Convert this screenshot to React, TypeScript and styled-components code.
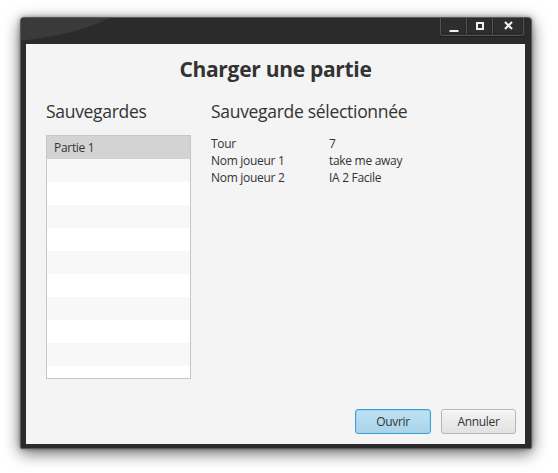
import React from "react";
import styled, { createGlobalStyle } from "styled-components";

const Global = createGlobalStyle`
  html, body { margin: 0; padding: 0; background: #ffffff; height: 100%; }
  body { font-family: "Open Sans", "Noto Sans", sans-serif; color: #333333; }
`;

const Page = styled.div`
  box-sizing: border-box;
  min-height: 100vh;
  padding: 17px 0 0 20px;
`;

const Window = styled.div`
  position: relative;
  box-sizing: border-box;
  width: 512px;
  height: 432px;
  display: flex;
  flex-direction: column;
  background: #2b2b2b;
  border: 1px solid #5a5a5a;
  border-radius: 4px 4px 2px 2px;
  padding: 0 6px 4px 5px;
  box-shadow: 0 4px 16px rgba(0, 0, 0, 0.6), 0 0 4px rgba(0, 0, 0, 0.35);
  overflow: hidden;
  &::before {
    content: "";
    position: absolute;
    left: -201px;
    top: -140px;
    width: 340px;
    height: 164px;
    border-radius: 50%;
    background: #3a3a3a;
  }
`;

const TitleBar = styled.div`
  position: relative;
  z-index: 1;
  height: 26px;
  display: flex;
  justify-content: flex-end;
  align-items: flex-start;
`;

const Controls = styled.div`
  display: flex;
  margin-top: -1px;
  margin-right: 1px;
  height: 18px;
  border: 1px solid #555555;
  border-top: none;
  border-radius: 0 0 3px 3px;
  background: #2e2e2e;
  box-shadow: 0 1px 0 #1c1c1c;
`;

const CtrlButton = styled.div<{ $w: number; $last?: boolean }>`
  width: ${(p) => p.$w}px;
  height: 17px;
  display: flex;
  align-items: center;
  justify-content: center;
  border-right: ${(p) => (p.$last ? "none" : "1px solid #555555")};
  box-shadow: inset 0 0 0 1px #262626;
`;

const Client = styled.div`
  position: relative;
  z-index: 1;
  flex: 1;
  background: #f4f4f4;
  display: flex;
  flex-direction: column;
  padding: 12px 9px 10px 20px;
  box-sizing: border-box;
`;

const Title = styled.h1`
  margin: 0;
  padding-right: 11px;
  text-align: center;
  font-size: 21px;
  line-height: 26px;
  font-weight: 700;
  letter-spacing: -0.3px;
  color: #333333;
`;

const Main = styled.div`
  flex: 1;
  display: flex;
  gap: 20px;
  margin-top: 18px;
`;

const Column = styled.div<{ $w?: number }>`
  display: flex;
  flex-direction: column;
  ${(p) => (p.$w ? `width: ${p.$w}px;` : "flex: 1;")}
`;

const Heading = styled.h2`
  margin: 0 0 13px 0;
  font-size: 17.5px;
  line-height: 22px;
  font-weight: 400;
  letter-spacing: -0.3px;
  color: #333333;
  white-space: nowrap;
`;

const List = styled.div`
  box-sizing: border-box;
  height: 244px;
  border: 1px solid #c6c6c6;
  background: #ffffff;
  overflow: hidden;
`;

const Row = styled.div<{ $variant: "selected" | "odd" | "even" }>`
  height: 23px;
  line-height: 23px;
  padding-left: 7px;
  font-size: 12px;
  letter-spacing: -0.3px;
  color: #333333;
  background: ${(p) =>
    p.$variant === "selected" ? "#d3d3d3" : p.$variant === "odd" ? "#f8f8f8" : "#ffffff"};
`;

const Details = styled.div`
  display: grid;
  grid-template-columns: 118px auto;
  grid-auto-rows: 17px;
  font-size: 12px;
  line-height: 17px;
  letter-spacing: -0.3px;
  color: #333333;
`;

const Footer = styled.div`
  display: flex;
  justify-content: flex-end;
  gap: 10px;
`;

const Button = styled.button<{ $default?: boolean }>`
  box-sizing: border-box;
  height: 25px;
  width: ${(p) => (p.$default ? 76 : 75)}px;
  padding: 0;
  font-family: inherit;
  font-size: 12px;
  letter-spacing: -0.3px;
  color: #333333;
  border-radius: 3px;
  border: 1px solid ${(p) => (p.$default ? "#3d9fd6" : "#b7b7b7")};
  background: ${(p) =>
    p.$default
      ? "linear-gradient(#bfe1f3, #a8d4ec)"
      : "linear-gradient(#f4f4f4, #e2e2e2)"};
  box-shadow: ${(p) => (p.$default ? "inset 0 0 0 1px #9fd3ee" : "inset 0 1px 0 #fbfbfb")};
`;

const rows = Array.from({ length: 11 }, (_, i) => i);

export default function App() {
  return (
    <>
      <Global />
      <Page>
        <Window>
          <TitleBar>
            <Controls>
              <CtrlButton $w={25}>
                <svg width="10" height="12" viewBox="0 0 10 12">
                  <rect x="0.5" y="10" width="9" height="2" fill="#f0f0f0" />
                </svg>
              </CtrlButton>
              <CtrlButton $w={25}>
                <svg width="8" height="8" viewBox="0 0 8 8">
                  <rect x="1" y="1" width="6" height="6" fill="none" stroke="#f0f0f0" strokeWidth="2" />
                </svg>
              </CtrlButton>
              <CtrlButton $w={30} $last>
                <svg width="9" height="9" viewBox="0 0 9 9">
                  <path d="M1 1 L8 8 M8 1 L1 8" stroke="#f0f0f0" strokeWidth="2.2" />
                </svg>
              </CtrlButton>
            </Controls>
          </TitleBar>
          <Client>
            <Title>Charger une partie</Title>
            <Main>
              <Column $w={145}>
                <Heading>Sauvegardes</Heading>
                <List>
                  {rows.map((i) => (
                    <Row key={i} $variant={i === 0 ? "selected" : i % 2 === 1 ? "odd" : "even"}>
                      {i === 0 ? "Partie 1" : ""}
                    </Row>
                  ))}
                </List>
              </Column>
              <Column>
                <Heading>Sauvegarde sélectionnée</Heading>
                <Details>
                  <span>Tour</span>
                  <span>7</span>
                  <span>Nom joueur 1</span>
                  <span>take me away</span>
                  <span>Nom joueur 2</span>
                  <span>IA 2 Facile</span>
                </Details>
              </Column>
            </Main>
            <Footer>
              <Button $default>Ouvrir</Button>
              <Button>Annuler</Button>
            </Footer>
          </Client>
        </Window>
      </Page>
    </>
  );
}
